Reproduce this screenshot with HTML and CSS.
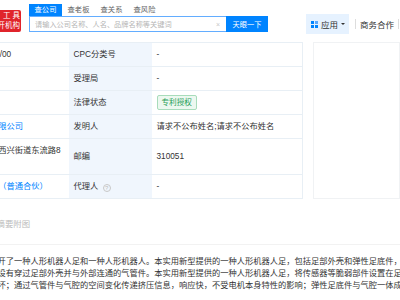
FILE: index.html
```html
<!DOCTYPE html>
<html lang="zh-CN">
<head>
  <meta charset="UTF-8">
  <meta name="viewport" content="width=device-width, initial-scale=1.0">
  <title>专利详情</title>
  <link rel="stylesheet" href="styles.css">
</head>
<body>
  <header class="topbar">
    <div class="logo">
      <span>工 具</span>
      <span>企业开机构</span>
    </div>

    <div class="search">
      <div class="search-tabs">
        <span class="tab active">查公司</span>
        <span class="tab">查老板</span>
        <span class="tab">查关系</span>
        <span class="tab">查风险</span>
      </div>
      <div class="search-bar">
        <div class="search-input">
          <span class="placeholder">请输入公司名称、人名、品牌名称等关键词</span>
          <span class="clear">×</span>
        </div>
        <button class="search-btn">天眼一下</button>
      </div>
    </div>

    <nav class="nav">
      <div class="app-btn">
        <svg class="app-icon" width="7" height="7" viewBox="0 0 7 7">
          <rect x="0" y="0" width="3" height="3" fill="#0084ff"/>
          <rect x="4" y="0" width="3" height="3" fill="#5aa9ff"/>
          <rect x="0" y="4" width="3" height="3" fill="#0084ff"/>
          <rect x="4" y="4" width="3" height="3" fill="#0084ff"/>
        </svg>
        <span>应用</span>
        <span class="caret"></span>
      </div>
      <span class="sep"></span>
      <span class="nav-link">商务合作</span>
      <span class="sep last"></span>
      <span class="nav-link">企业认证</span>
    </nav>
  </header>

  <main class="page">
    <div class="detail">
      <table class="info">
        <colgroup>
          <col class="col-label">
          <col class="col-value-wide">
          <col class="col-label">
          <col class="col-value">
        </colgroup>
        <tr>
          <td class="label">IPC分类号</td>
          <td class="value">B62D57/02;G01/00</td>
          <td class="label">CPC分类号</td>
          <td class="value">-</td>
        </tr>
        <tr>
          <td class="label">优先权</td>
          <td class="value">-</td>
          <td class="label">受理局</td>
          <td class="value">-</td>
        </tr>
        <tr>
          <td class="label">代理机构代码</td>
          <td class="value">33200</td>
          <td class="label">法律状态</td>
          <td class="value"><span class="tag">专利授权</span></td>
        </tr>
        <tr>
          <td class="label">申请人</td>
          <td class="value"><a class="link">杭州宇树科技有限公司</a></td>
          <td class="label">发明人</td>
          <td class="value">请求不公布姓名;请求不公布姓名</td>
        </tr>
        <tr class="tall">
          <td class="label">地址</td>
          <td class="value">浙江杭州滨江区西兴街道东流路8号</td>
          <td class="label">邮编</td>
          <td class="value">310051</td>
        </tr>
        <tr>
          <td class="label">代理机构</td>
          <td class="value"><a class="link">杭州专利事务所（普通合伙）</a></td>
          <td class="label">代理人 <span class="help">?</span></td>
          <td class="value">-</td>
        </tr>
      </table>
      <aside class="side"></aside>
    </div>

    <section class="abstract">
      <h3 class="section-title">摘要附图</h3>
      <p class="abstract-text">本实用新型公开了一种人形机器人足和一种人形机器人。本实用新型提供的一种人形机器人足，包括足部外壳和弹性足底件，弹性足底件围成气腔，并设有穿过足部外壳并与外部连通的气管件。本实用新型提供的一种人形机器人足，将传感器等脆弱部件设置在足部外壳内，避免受冲击损坏；通过气管件与气腔的空间变化传递挤压信息，响应快，不受电机本身特性的影响；弹性足底件与气腔一体成型，结构简单，成本低。</p>
    </section>
  </main>
</body>
</html>
```

FILE: styles.css
```css
:root {
  --primary: #0084ff;
  --text: #333;
  --muted: #999;
  --label-bg: #f0f6fd;
  --line: #e8eff5;
}

* {
  box-sizing: border-box;
  margin: 0;
  padding: 0;
}

body {
  font-family: 'Liberation Sans', 'Noto Sans CJK SC', sans-serif;
  color: var(--text);
  background: #fff;
  overflow: hidden;
  white-space: nowrap;
}

/* header */
.topbar {
  display: flex;
  align-items: flex-start;
  height: 38px;
}

.topbar > * {
  flex-shrink: 0;
}

.logo {
  width: 21px;
  height: 22px;
  margin-top: 10px;
  background: #e0242b;
  color: #fff;
  font-size: 7.5px;
  line-height: 10px;
  padding-top: 1px;
  display: flex;
  flex-direction: column;
  align-items: flex-end;
  overflow: hidden;
  border-radius: 0 2px 2px 0;
}

.logo span {
  padding-right: 1px;
}

.search {
  margin: 4px 0 0 8px;
  width: 239px;
}

.search-tabs {
  display: flex;
  height: 12px;
}

.tab {
  width: 33px;
  text-align: center;
  font-size: 7.3px;
  line-height: 12px;
  color: #666;
}

.tab.active {
  background: var(--primary);
  color: #fff;
}

.search-bar {
  display: flex;
  height: 16px;
}

.search-input {
  flex: 1;
  display: flex;
  align-items: center;
  border: 1px solid #63adff;
  border-right: none;
  padding: 0 6px 0 5px;
}

.placeholder {
  flex: 1;
  font-size: 7.2px;
  color: #b5b5b5;
}

.clear {
  font-size: 7px;
  color: #c8c8c8;
}

.search-btn {
  width: 42px;
  flex-shrink: 0;
  border: none;
  background: var(--primary);
  color: #fff;
  font-family: inherit;
  font-size: 7.2px;
}

.nav {
  display: flex;
  align-items: center;
  margin: 14px 0 0 38px;
  height: 20px;
  font-size: 8.5px;
}

.app-btn {
  display: flex;
  align-items: center;
  width: 43px;
  height: 20px;
  padding-left: 5px;
  background: #e6f2ff;
}

.app-icon {
  margin-right: 3px;
}

.caret {
  margin-left: 3px;
  border-left: 2px solid transparent;
  border-right: 2px solid transparent;
  border-top: 2.5px solid #333;
}

.sep {
  width: 1px;
  height: 10px;
  background: #ddd;
  margin: 0 4px 0 6px;
}

.sep.last {
  margin: 0 12px 0 4px;
}

/* detail table */
.page {
  margin: 4px 0 0 -148px;
}

.detail {
  display: flex;
  gap: 10px;
}

.info {
  width: 450px;
  border-collapse: collapse;
  table-layout: fixed;
  font-size: 8.25px;
  border: 1px solid var(--line);
}

.col-label {
  width: 83px;
}

.col-value-wide {
  width: 133px;
}

.col-value {
  width: 151px;
}

.info td {
  height: 24px;
  padding: 0 5px;
  line-height: 12px;
  border-bottom: 1px solid var(--line);
  vertical-align: middle;
  overflow: hidden;
}

.info tr.tall td {
  height: 36px;
}

.info tr.tall .value {
  white-space: normal;
}

.info .label {
  background: var(--label-bg);
}

.link {
  color: var(--primary);
}

.tag {
  display: inline-block;
  font-size: 7.6px;
  line-height: 13px;
  padding: 0 4px;
  color: #1f9d55;
  background: #ecf8f0;
  border: 1px solid #a8dcbb;
  border-radius: 2px;
}

.help {
  display: inline-block;
  width: 8px;
  height: 8px;
  margin-left: 2px;
  border: 1px solid #c8c8c8;
  border-radius: 50%;
  color: #bbb;
  font-size: 6px;
  line-height: 6px;
  text-align: center;
  vertical-align: -1px;
}

.side {
  width: 200px;
  border: 1px solid #f0f2f4;
}

/* abstract */
.abstract {
  margin: 18px 0 0 96px;
}

.section-title {
  width: 800px;
  margin-left: -96px;
  padding: 0 0 13px 144.6px;
  font-size: 8.4px;
  font-weight: normal;
  line-height: 14px;
  color: #bbb;
  border-bottom: 1px solid #f2f2f2;
}

.abstract-text {
  width: 497px;
  margin-top: 11px;
  font-size: 8.25px;
  line-height: 12px;
  white-space: normal;
}
```
